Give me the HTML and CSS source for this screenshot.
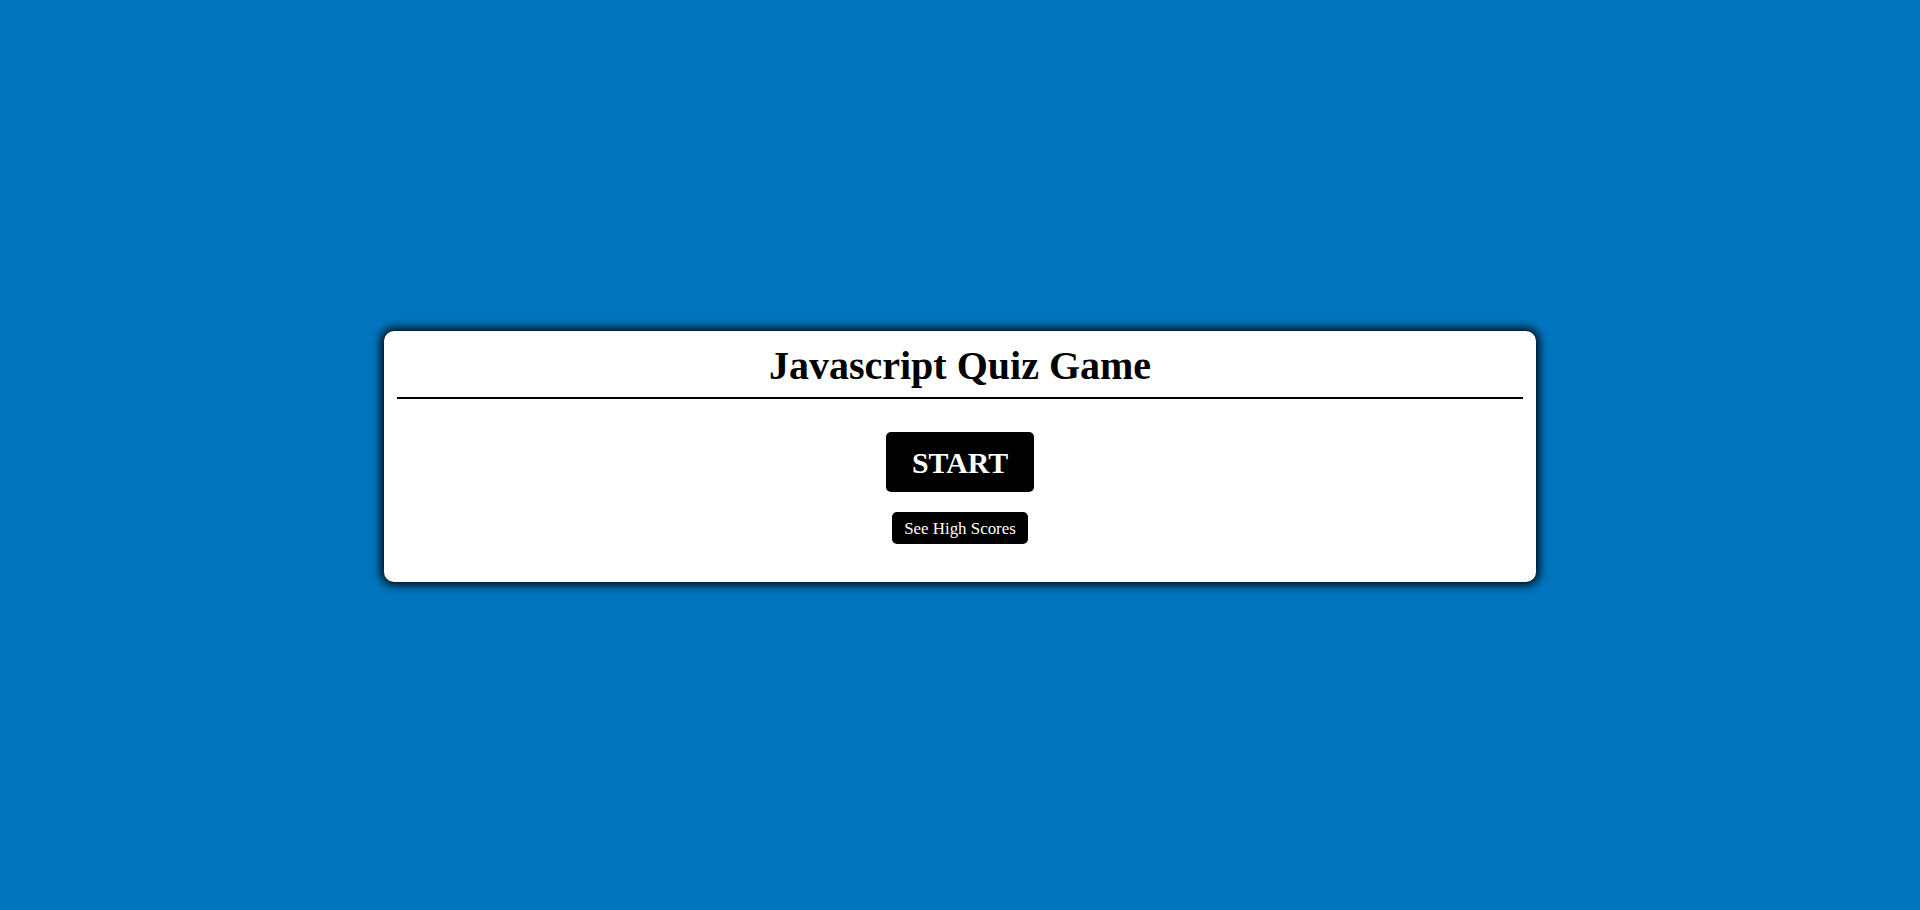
FILE: index.html
```html
<!DOCTYPE html>
<html lang="en">
<head>
<meta charset="utf-8">
<title>Javascript Quiz Game</title>
<link rel="stylesheet" href="styles.css">
</head>
<body>
<main class="page">
  <section class="card">
    <h1 class="title">Javascript Quiz Game</h1>
    <hr class="rule">
    <div class="actions">
      <button class="btn-start" type="button">START</button>
      <button class="btn-scores" type="button">See High Scores</button>
    </div>
  </section>
</main>
</body>
</html>
```

FILE: styles.css
```css
html, body {
  margin: 0;
  padding: 0;
  height: 100%;
}

body {
  background: #0075be;
  font-family: "Liberation Serif", "Times New Roman", serif;
  color: #000;
}

.page {
  height: 100%;
  box-sizing: border-box;
  padding-top: 3px;
  display: flex;
  align-items: center;
  justify-content: center;
}

.card {
  width: 1152px;
  box-sizing: border-box;
  background: #fff;
  border-radius: 10px;
  padding: 12px 13px 38px;
  box-shadow: 0 0 10px 3px rgba(0, 0, 0, 0.95);
}

.title {
  margin: 0;
  font-size: 40px;
  font-weight: bold;
  text-align: center;
  line-height: 46px;
}

.rule {
  margin: 8px 0 0;
  border: none;
  height: 2px;
  background: #000;
}

.actions {
  display: flex;
  flex-direction: column;
  align-items: center;
  padding-top: 33px;
  gap: 20px;
}

.btn-start,
.btn-scores {
  background: #000;
  color: #fff;
  border: none;
  border-radius: 5px;
  font-family: "Liberation Serif", "Times New Roman", serif;
  cursor: pointer;
}

.btn-start {
  width: 148px;
  font-size: 29.8px;
  font-weight: bold;
  line-height: 33px;
  padding: 13.5px 0;
}

.btn-scores {
  width: 136px;
  font-size: 16.9px;
  line-height: 19px;
  padding: 6.5px 0;
}
```
